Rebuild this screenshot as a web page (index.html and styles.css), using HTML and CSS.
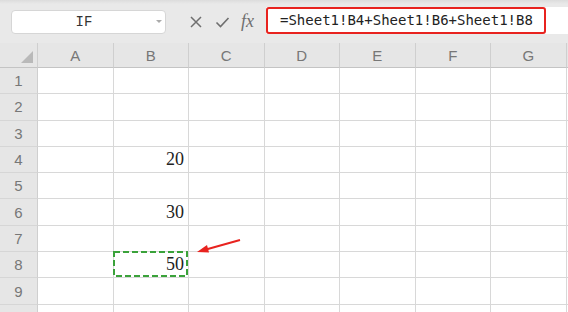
FILE: index.html
```html
<!DOCTYPE html>
<html lang="en">
<head>
    <meta charset="UTF-8">
    <title>Sheet</title>
    <link rel="stylesheet" href="styles.css">
</head>
<body>
    <div class="toolbar">
        <div class="name-box">
            <span class="name">IF</span>
            <span class="caret"></span>
        </div>
        <div class="bar-icons">
            <svg width="14" height="14" viewBox="0 0 14 14"><path d="M2 2 L12 12 M12 2 L2 12" stroke="#6f6f6f" stroke-width="1.5" fill="none"/></svg>
            <svg width="15" height="14" viewBox="0 0 15 14"><path d="M1.5 7.5 L5.5 11.5 L13.5 3" stroke="#6f6f6f" stroke-width="1.6" fill="none"/></svg>
            <span class="fx">fx</span>
        </div>
        <div class="formula">
            <span class="formula-text">=Sheet1!B4+Sheet1!B6+Sheet1!B8</span>
        </div>
    </div>

    <div class="sheet">
        <div class="corner"><span class="tri"></span></div>
        <div class="col-head">A</div>
        <div class="col-head">B</div>
        <div class="col-head">C</div>
        <div class="col-head">D</div>
        <div class="col-head">E</div>
        <div class="col-head">F</div>
        <div class="col-head">G</div>
        <div class="col-head end"></div>
    </div>
    <div class="sheet body" id="rows"></div>

    <svg class="arrow" width="60" height="30" viewBox="0 0 60 30">
        <path d="M46 4 L12 13.5" stroke="#e8231f" stroke-width="2" fill="none"/>
        <path d="M3 16 L13 9 L15 16.5 Z" fill="#e8231f"/>
    </svg>

    <script>
        const values = { 4: "20", 6: "30", 8: "50" };
        const rows = document.getElementById("rows");
        for (let r = 1; r <= 10; r++) {
            let html = '<div class="row-head">' + r + '</div>';
            for (let c = 0; c < 7; c++) {
                if (c === 1 && values[r]) {
                    html += '<div class="cell num">' + values[r] +
                        (r === 8 ? '<svg class="dash"><rect x="1" y="1" width="73" height="24" /></svg>' : '') + '</div>';
                } else {
                    html += '<div class="cell"></div>';
                }
            }
            html += '<div class="cell end"></div>';
            rows.insertAdjacentHTML("beforeend", html);
        }
    </script>
</body>
</html>
```

FILE: styles.css
```css
body {
    margin: 0;
    background: #fff;
    font-family: "Liberation Sans", Arial, sans-serif;
    position: relative;
    height: 312px;
    overflow: hidden;
}
.toolbar {
    display: flex;
    align-items: center;
    height: 43px;
    background: linear-gradient(#dcdcdc, #e9e9e9 4px, #e9e9e9);
    padding-left: 11px;
    box-sizing: border-box;
}
.name-box {
    width: 155px;
    height: 24px;
    background: #fff;
    border: 1px solid #d6d6d6;
    border-radius: 4px;
    box-sizing: border-box;
    display: flex;
    align-items: center;
}
.name {
    flex: 1;
    text-align: center;
    font-family: "Liberation Mono", monospace;
    font-size: 14px;
    color: #333;
}
.caret {
    width: 0;
    height: 0;
    border-left: 3px solid transparent;
    border-right: 3px solid transparent;
    border-top: 3px solid #aaa;
    margin-right: 3px;
}
.bar-icons {
    display: flex;
    align-items: center;
    gap: 12px;
    margin-left: 23px;
    width: 77px;
}
.fx {
    font-family: "Liberation Serif", serif;
    font-style: italic;
    font-size: 18px;
    color: #6f6f6f;
    margin-left: -1px;
}
.formula {
    flex: 1;
    height: 27px;
    background: #fff;
    display: flex;
    margin-top: -2px;
}
.formula-text {
    width: 280px;
    box-sizing: border-box;
    border: 2px solid #e8231f;
    border-radius: 3px;
    font-family: "DejaVu Sans Mono", monospace;
    font-size: 14px;
    color: #222;
    padding-left: 12px;
    line-height: 23px;
    white-space: nowrap;
}
.sheet {
    display: grid;
    grid-template-columns: 38px repeat(7, 75.5px) 1fr;
}
.corner, .col-head {
    height: 25px;
    background: #e6e6e6;
    border-right: 1px solid #cfcfcf;
    border-bottom: 1px solid #c4c4c4;
    box-sizing: border-box;
    display: flex;
    align-items: center;
    justify-content: center;
    color: #777;
    font-size: 15px;
}
.col-head.end {
    border-right: none;
}
.corner {
    position: relative;
}
.tri {
    position: absolute;
    right: 4px;
    bottom: 4px;
    width: 0;
    height: 0;
    border-left: 12px solid transparent;
    border-bottom: 12px solid #b9b9b9;
}
.sheet.body {
    grid-auto-rows: 26.3px;
}
.row-head {
    background: #e6e6e6;
    border-right: 1px solid #cfcfcf;
    border-bottom: 1px solid #d6d6d6;
    box-sizing: border-box;
    display: flex;
    align-items: center;
    justify-content: center;
    color: #777;
    font-size: 15px;
}
.cell {
    border-right: 1px solid #d8d8d8;
    border-bottom: 1px solid #d8d8d8;
    box-sizing: border-box;
}
.cell.end {
    border-right: none;
}
.cell.num {
    display: flex;
    align-items: center;
    justify-content: flex-end;
    padding-right: 4px;
    font-family: "Liberation Serif", serif;
    font-size: 18px;
    color: #222;
    position: relative;
}
.dash {
    position: absolute;
    left: -1px;
    top: -1px;
    width: 76px;
    height: 27px;
}
.dash rect {
    fill: none;
    stroke: #3aa23a;
    stroke-width: 2;
    stroke-dasharray: 6 3;
}
.arrow {
    position: absolute;
    left: 194px;
    top: 236px;
}
```
